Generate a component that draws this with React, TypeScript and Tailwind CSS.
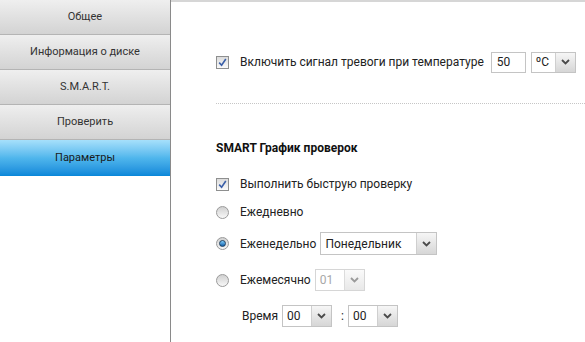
import React from 'react'

// Disk settings screen: left tab list + alarm / SMART schedule form.
const tabs = ['Общее', 'Информация о диске', 'S.M.A.R.T.', 'Проверить', 'Параметры']

function Chevron({ dim }: { dim?: boolean }) {
  return (
    <svg width="9" height="6" viewBox="0 0 9 6" className="block">
      <path d="M1 1 L4.5 4.5 L8 1" fill="none" stroke={dim ? '#9a9a9a' : '#4a4a4a'} strokeWidth="1.8" />
    </svg>
  )
}

function Select({ value, w, h = 22, disabled }: { value: string; w: number; h?: number; disabled?: boolean }) {
  return (
    <div
      className={`flex border ${disabled ? 'border-[#d6d6d6]' : 'border-[#c4c4c4]'} bg-white`}
      style={{ width: w, height: h }}
    >
      <span className={`flex-1 flex items-center pl-[4px] text-[12px] ${disabled ? 'text-[#a8a8a8]' : 'text-[#222]'}`}>{value}</span>
      <span className={`w-[20px] flex items-center justify-center border-l ${disabled ? 'border-[#dcdcdc] bg-gradient-to-b from-[#fafafa] to-[#e8e8e8]' : 'border-[#cfcfcf] bg-gradient-to-b from-[#f6f6f6] to-[#d6d6d6]'}`}>
        <Chevron dim={disabled} />
      </span>
    </div>
  )
}

function Checkbox() {
  return (
    <span className="w-[13px] h-[13px] border border-[#8e8f8f] bg-gradient-to-b from-[#dcdcdc] to-[#fafafa] flex items-center justify-center shrink-0">
      <svg width="9" height="9" viewBox="0 0 9 9">
        <path d="M1.2 4.6 L3.6 7.2 L7.8 1" fill="none" stroke="#3a5fa8" strokeWidth="1.6" />
      </svg>
    </span>
  )
}

function Radio({ checked }: { checked?: boolean }) {
  return (
    <span className="w-[13px] h-[13px] rounded-full border border-[#9a9a9a] bg-gradient-to-b from-[#d0d0d0] to-[#f8f8f8] flex items-center justify-center shrink-0">
      {checked && <span className="w-[7px] h-[7px] rounded-full bg-gradient-to-b from-[#7fd0ff] to-[#0c5fa8] border border-[#1d3f60]" />}
    </span>
  )
}

export default function App() {
  return (
    <div className="w-[585px] h-[342px] flex bg-white overflow-hidden text-[#222]" style={{ fontFamily: 'Roboto, "Liberation Sans", sans-serif' }}>
      <div className="w-[171px] shrink-0 border-r border-[#8a8a8a] flex flex-col">
        {tabs.map((t, i) => {
          const active = i === tabs.length - 1
          return (
            <div
              key={t}
              className={`h-[35px] flex items-center justify-center text-[11px] ${
                active
                  ? 'h-[36px] bg-gradient-to-b from-[#a6e0fb] via-[#4fb6ec] to-[#0787d9] text-[#1a1a1a]'
                  : 'border-b border-[#b4b4b4] bg-gradient-to-b from-[#efefef] to-[#d3d3d3] text-[#333]'
              }`}
            >
              {t}
            </div>
          )
        })}
      </div>

      <div className="flex-1 flex flex-col border-t-2 border-[#d6d6d6] text-[12px] whitespace-nowrap">
        <div className="pl-[45px] mt-[49px] h-[22px] flex items-center">
          <Checkbox />
          <span className="ml-[11px]">Включить сигнал тревоги при температуре</span>
          <div className="ml-[7px] w-[35px] h-[21px] border border-[#c4c4c4] flex items-center pl-[5px]">50</div>
          <div className="ml-[5px]">
            <Select value="ºC" w={45} h={21} />
          </div>
        </div>

        <div className="ml-[45px] mt-[30px] border-t border-dotted border-[#c6c6c6]" />

        <div className="pl-[45px] mt-[36px] h-[16px] flex items-center font-bold text-[12px] text-[#111]">SMART График проверок</div>

        <div className="pl-[45px] mt-[18px] h-[20px] flex items-center">
          <Checkbox />
          <span className="ml-[11px]">Выполнить быструю проверку</span>
        </div>

        <div className="pl-[45px] mt-[8px] h-[20px] flex items-center">
          <Radio />
          <span className="ml-[11px]">Ежедневно</span>
        </div>

        <div className="pl-[45px] mt-[10px] h-[23px] flex items-center">
          <Radio checked />
          <span className="ml-[11px]">Еженедельно</span>
          <div className="ml-[4px]">
            <Select value="Понедельник" w={117} h={23} />
          </div>
        </div>

        <div className="pl-[45px] mt-[14px] h-[22px] flex items-center">
          <Radio />
          <span className="ml-[11px]">Ежемесячно</span>
          <div className="ml-[4px]">
            <Select value="01" w={50} disabled />
          </div>
        </div>

        <div className="pl-[71px] mt-[14px] h-[22px] flex items-center">
          <span>Время</span>
          <div className="ml-[4px]">
            <Select value="00" w={50} />
          </div>
          <span className="ml-[9px] mr-[4px]">:</span>
          <Select value="00" w={50} />
        </div>
      </div>
    </div>
  )
}
